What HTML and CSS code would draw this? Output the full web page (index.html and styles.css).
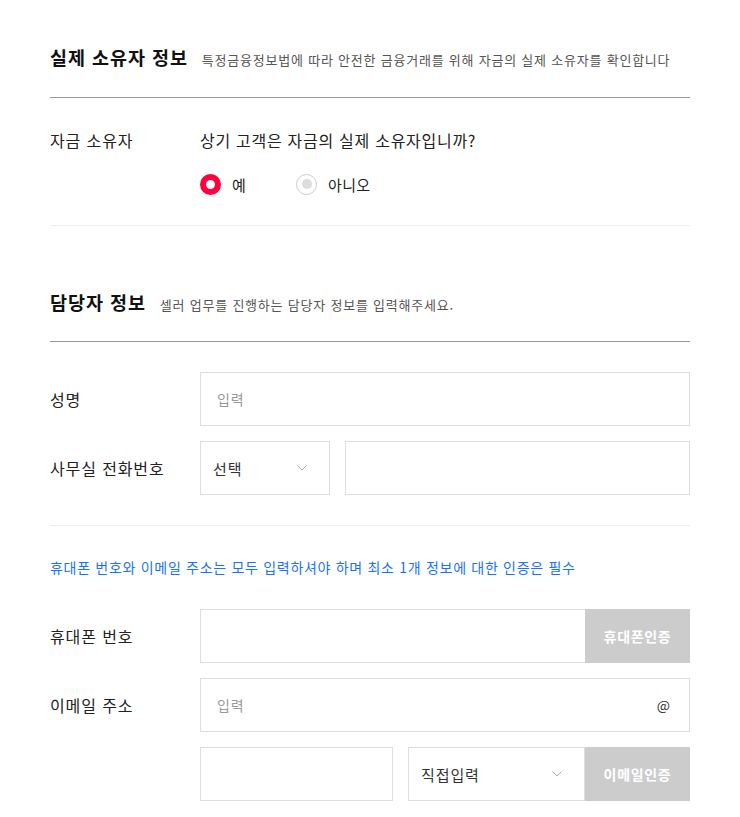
FILE: index.html
```html
<!DOCTYPE html>
<html lang="ko">
<head>
    <meta charset="UTF-8">
    <meta name="viewport" content="width=device-width, initial-scale=1.0">
    <title>실제 소유자 정보</title>
    <link rel="stylesheet" href="styles.css">
</head>
<body>
    <div class="wrap">
        <!-- 실제 소유자 정보 -->
        <div class="sec-head">
            <h2>실제 소유자 정보</h2>
            <p>특정금융정보법에 따라 안전한 금융거래를 위해 자금의 실제 소유자를 확인합니다</p>
        </div>

        <div class="owner">
            <div class="field-label">자금 소유자</div>
            <div class="owner-body">
                <div class="question">상기 고객은 자금의 실제 소유자입니까?</div>
                <div class="radios">
                    <label class="radio checked"><span class="radio-mark"></span>예</label>
                    <label class="radio"><span class="radio-mark"></span>아니오</label>
                </div>
            </div>
        </div>

        <!-- 담당자 정보 -->
        <div class="sec-head second">
            <h2>담당자 정보</h2>
            <p>셀러 업무를 진행하는 담당자 정보를 입력해주세요.</p>
        </div>

        <div class="fields">
            <div class="field-row">
                <div class="field-label">성명</div>
                <div class="field-body">
                    <input class="input" type="text" placeholder="입력">
                </div>
            </div>
            <div class="field-row">
                <div class="field-label">사무실 전화번호</div>
                <div class="field-body">
                    <div class="select small">
                        <span>선택</span>
                        <svg width="10" height="6" viewBox="0 0 10 6"><polyline points="0.5,0.5 5,5 9.5,0.5" fill="none" stroke="#aaa" stroke-width="1"/></svg>
                    </div>
                    <input class="input" type="text">
                </div>
            </div>
        </div>

        <p class="notice">휴대폰 번호와 이메일 주소는 모두 입력하셔야 하며 최소 1개 정보에 대한 인증은 필수</p>

        <div class="contact">
            <div class="field-row">
                <div class="field-label">휴대폰 번호</div>
                <div class="field-body">
                    <div class="group">
                        <input class="input" type="text">
                        <button class="btn-auth">휴대폰인증</button>
                    </div>
                </div>
            </div>
            <div class="field-row">
                <div class="field-label">이메일 주소</div>
                <div class="field-body">
                    <div class="input-box">
                        <input type="text" placeholder="입력">
                        <span class="at">@</span>
                    </div>
                </div>
            </div>
            <div class="field-row">
                <div class="field-label"></div>
                <div class="field-body">
                    <input class="input domain" type="text">
                    <div class="group">
                        <div class="select">
                            <span>직접입력</span>
                            <svg width="10" height="6" viewBox="0 0 10 6"><polyline points="0.5,0.5 5,5 9.5,0.5" fill="none" stroke="#aaa" stroke-width="1"/></svg>
                        </div>
                        <button class="btn-auth">이메일인증</button>
                    </div>
                </div>
            </div>
        </div>
    </div>
</body>
</html>
```

FILE: styles.css
```css
body {
    margin: 0;
    background: #fff;
    color: #222;
    font-family: "Noto Sans CJK KR", "Noto Sans", sans-serif;
    letter-spacing: 0.055em;
}

.wrap {
    width: 640px;
    padding: 42px 50px 16px;
}

.sec-head {
    display: flex;
    align-items: baseline;
    gap: 14px;
    height: 30px;
    line-height: 30px;
    padding-bottom: 25px;
    border-bottom: 1px solid #999;
}

.sec-head.second {
    margin-top: 61px;
    padding-bottom: 24px;
}

.sec-head h2 {
    margin: 0;
    font-size: 18.5px;
    font-weight: 700;
    color: #111;
    letter-spacing: 0.05em;
}

.sec-head p {
    margin: 0;
    font-size: 13px;
    color: #555;
    letter-spacing: 0.06em;
}

.owner {
    display: flex;
    padding: 30px 0;
    border-bottom: 1px solid #eee;
}

.field-label {
    width: 150px;
    flex-shrink: 0;
    font-size: 16px;
    line-height: 24px;
}

.question {
    font-size: 16px;
    line-height: 24px;
    letter-spacing: 0.045em;
}

.radios {
    display: flex;
    margin-top: 21px;
    height: 22px;
}

.radio {
    display: flex;
    align-items: center;
    gap: 11px;
    margin-right: 50px;
    font-size: 15px;
    color: #222;
    letter-spacing: 0.02em;
}

.radio-mark {
    width: 21px;
    height: 21px;
    box-sizing: border-box;
    border: 1px solid #ccc;
    border-radius: 50%;
    display: flex;
    align-items: center;
    justify-content: center;
}

.radio-mark::after {
    content: "";
    width: 10px;
    height: 10px;
    border-radius: 50%;
    background: #ddd;
}

.radio.checked .radio-mark {
    border: 6px solid #ff003c;
}

.radio.checked .radio-mark::after {
    display: none;
}

.fields {
    display: flex;
    flex-direction: column;
    gap: 15px;
    padding: 30px 0;
    border-bottom: 1px solid #eee;
}

.field-row {
    display: flex;
    align-items: center;
}

.field-body {
    flex: 1;
    display: flex;
    gap: 15px;
}

.input {
    flex: 1;
    min-width: 0;
    height: 54px;
    box-sizing: border-box;
    border: 1px solid #ddd;
    padding: 0 16px;
    font-family: inherit;
    font-size: 14px;
    letter-spacing: 0.07em;
    color: #222;
    outline: none;
}

.input::placeholder,
.input-box input::placeholder {
    color: #999;
}

.input.domain {
    flex: 0 0 193px;
}

.select {
    flex: 1;
    display: flex;
    align-items: center;
    justify-content: space-between;
    height: 54px;
    box-sizing: border-box;
    border: 1px solid #ddd;
    padding: 0 22px 0 12px;
    font-size: 15px;
    color: #333;
    letter-spacing: 0.06em;
}

.select.small {
    flex: 0 0 130px;
}

.notice {
    margin: 31px 0 0;
    font-size: 14px;
    line-height: 20px;
    color: #1a73f5;
    letter-spacing: 0.05em;
}

.contact {
    display: flex;
    flex-direction: column;
    gap: 15px;
    margin-top: 32px;
}

.group {
    flex: 1;
    display: flex;
}

.group .input {
    border-right: none;
}

.btn-auth {
    width: 105px;
    height: 54px;
    border: none;
    background: #ccc;
    color: #fff;
    font-family: inherit;
    font-size: 14px;
    font-weight: 700;
    letter-spacing: 0.05em;
    cursor: pointer;
}

.input-box {
    flex: 1;
    display: flex;
    align-items: center;
    height: 54px;
    box-sizing: border-box;
    border: 1px solid #ddd;
    padding: 0 19px 0 16px;
}

.input-box input {
    flex: 1;
    border: none;
    outline: none;
    padding: 0;
    font-family: inherit;
    font-size: 14px;
    letter-spacing: 0.07em;
}

.at {
    font-size: 14px;
    color: #333;
    letter-spacing: 0;
}
```
